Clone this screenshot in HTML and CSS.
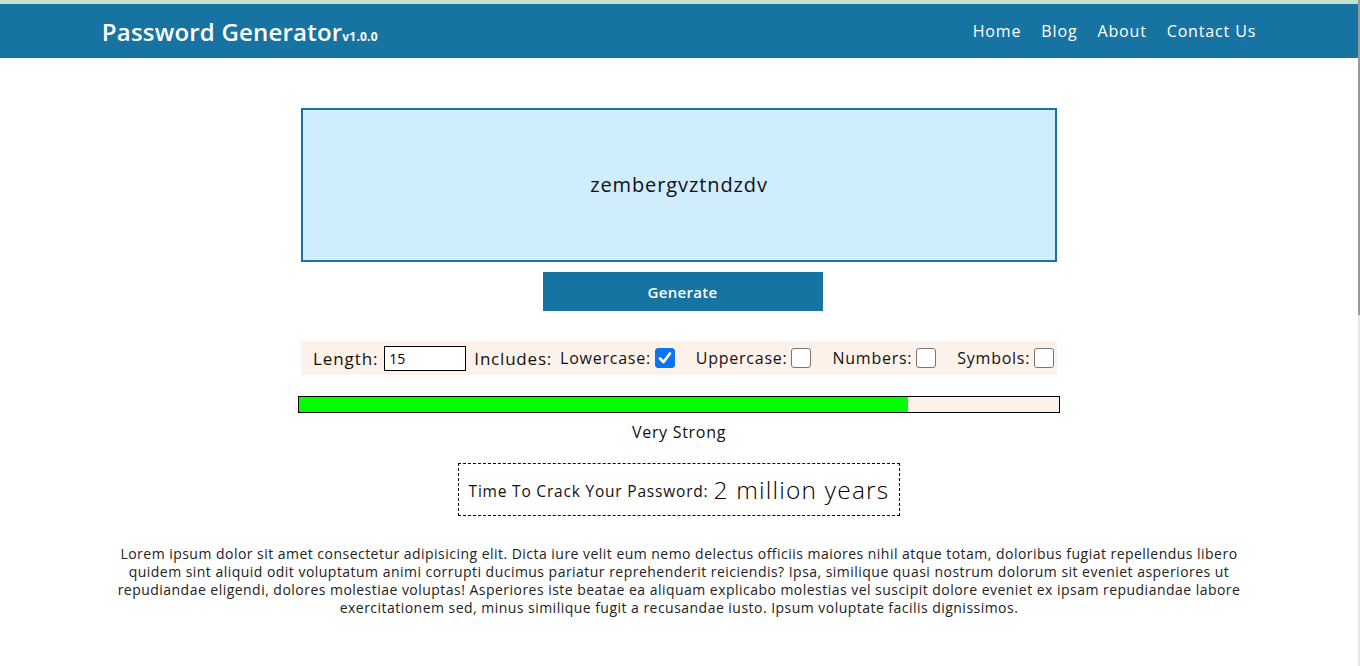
FILE: index.html
```html
<!DOCTYPE html>
<html lang="en">
<head>
<meta charset="utf-8">
<title>Password Generator</title>
<link rel="stylesheet" href="styles.css">
</head>
<body>
<div class="frame">
  <div class="page">
    <div class="topstrip"></div>
    <header class="nav">
      <div class="nav-inner">
        <div class="brand">Password Generator<span class="ver">v1.0.0</span></div>
        <nav class="links">
          <a href="#">Home</a>
          <a href="#">Blog</a>
          <a href="#">About</a>
          <a href="#">Contact Us</a>
        </nav>
      </div>
    </header>
    <main class="main">
      <div class="pw-box">zembergvztndzdv</div>
      <button class="gen-btn">Generate</button>
      <div class="options">
        <label class="opt-len">Length:<input class="len" type="text" value="15"></label>
        <span class="opt-inc">Includes:</span>
        <label class="opt">Lowercase:<span class="cb checked"><svg viewBox="0 0 20 20" width="20" height="20"><path d="M5 10.5 L8.5 14 L15 5.5" fill="none" stroke="#fff" stroke-width="2.8" stroke-linecap="round" stroke-linejoin="round"/></svg></span></label>
        <label class="opt">Uppercase:<span class="cb"></span></label>
        <label class="opt">Numbers:<span class="cb"></span></label>
        <label class="opt">Symbols:<span class="cb"></span></label>
      </div>
      <div class="meter"><div class="meter-fill" style="width:80.1%"></div></div>
      <div class="strength">Very Strong</div>
      <div class="crack"><span class="crack-label">Time To Crack Your Password:</span><span class="crack-val">2 million years</span></div>
      <p class="lorem">Lorem ipsum dolor sit amet consectetur adipisicing elit. Dicta iure velit eum nemo delectus officiis maiores nihil atque totam, doloribus fugiat repellendus libero quidem sint aliquid odit voluptatum animi corrupti ducimus pariatur reprehenderit reiciendis? Ipsa, similique quasi nostrum dolorum sit eveniet asperiores ut repudiandae eligendi, dolores molestiae voluptas! Asperiores iste beatae ea aliquam explicabo molestias vel suscipit dolore eveniet ex ipsam repudiandae labore exercitationem sed, minus similique fugit a recusandae iusto. Ipsum voluptate facilis dignissimos.</p>
    </main>
  </div>
  <div class="scrollbar"><div class="thumb"></div></div>
</div>
</body>
</html>
```
FILE: styles.css
```css
* { box-sizing: border-box; }
html, body { margin: 0; padding: 0; }
body {
  background: #fff;
  font-family: "Open Sans", "DejaVu Sans", sans-serif;
  color: #111;
  height: 666px;
  overflow: hidden;
}
.frame {
  display: flex;
  height: 666px;
}
.page {
  flex: 1;
  min-width: 0;
}
.scrollbar {
  width: 2px;
  display: flex;
  flex-direction: column;
  background: #e6e6e6;
}
.thumb {
  height: 315px;
  background: #9a9a9a;
}
.topstrip {
  height: 4px;
  background: #c3e2c7;
}
.nav {
  background: #1773a2;
  height: 54px;
}
.nav-inner {
  width: 85%;
  margin: 0 auto;
  height: 100%;
  display: flex;
  align-items: center;
  justify-content: space-between;
}
.brand {
  color: #fff;
  font-family: "Open Sans", sans-serif;
  font-weight: 600;
  font-size: 24px;
  letter-spacing: 0.2px;
  padding-top: 1px;
}
.ver {
  font-size: 12px;
  font-weight: 700;
  letter-spacing: 0.2px;
}
.links {
  display: flex;
  gap: 20px;
}
.links a {
  color: #fff;
  text-decoration: none;
  font-size: 16px;
  font-family: "Open Sans", sans-serif;
  font-weight: 500;
  letter-spacing: 0.85px;
}
.main {
  display: flex;
  flex-direction: column;
  align-items: center;
  padding-top: 50px;
}
.pw-box {
  width: 756px;
  height: 154px;
  border: 2px solid #1773a2;
  background: #cfedfd;
  display: flex;
  align-items: center;
  justify-content: center;
  font-family: "Open Sans", sans-serif;
  font-size: 20px;
  letter-spacing: 0.9px;
  color: #111;
  padding-bottom: 2px;
}
.gen-btn {
  margin-top: 10px;
  margin-left: 7px;
  width: 280px;
  height: 39px;
  background: #1773a2;
  color: #fff;
  border: none;
  font-family: "Open Sans", sans-serif;
  font-weight: 600;
  font-size: 15px;
  letter-spacing: 0.3px;
}
.options {
  margin-top: 30px;
  width: 756px;
  height: 34px;
  background: #fdf2ea;
  display: flex;
  align-items: center;
  padding-left: 12px;
  font-family: "Open Sans", sans-serif;
  letter-spacing: 0.75px;
}
.opt-len {
  font-size: 17px;
  letter-spacing: 0.9px;
  display: flex;
  align-items: center;
}
.opt-inc {
  font-size: 17px;
  letter-spacing: 0.8px;
  margin-left: 8px;
  margin-right: 8px;
}
.opt {
  font-size: 16px;
  display: flex;
  align-items: center;
  margin-right: 21px;
}
.opt:last-child { margin-right: 0; }
.len {
  width: 82px;
  height: 25px;
  margin-left: 6px;
  border: 1px solid #000;
  font-family: "Open Sans", sans-serif;
  font-size: 14px;
  letter-spacing: 0;
  padding: 0 4px;
}
.cb {
  width: 20px;
  height: 20px;
  border: 1px solid #767676;
  border-radius: 3px;
  background: #fff;
  margin-left: 4px;
  display: inline-flex;
}
.cb.checked {
  background: #0b74f0;
  border-color: #0b74f0;
}
.cb.checked svg { margin: -1px; }
.meter {
  margin-top: 21px;
  width: 762px;
  height: 17px;
  border: 1px solid #000;
  background: #fdf2ea;
}
.meter-fill {
  height: 100%;
  background: #00ff00;
}
.strength {
  margin-top: 8px;
  font-family: "Open Sans", sans-serif;
  font-size: 16px;
  letter-spacing: 0.7px;
}
.crack {
  margin-top: 20px;
  border: 1px dashed #000;
  height: 53px;
  padding: 0 10px;
  display: flex;
  align-items: center;
  gap: 5px;
}
.crack-label {
  font-family: "Open Sans", sans-serif;
  font-size: 15.5px;
  letter-spacing: 0.8px;
  padding-top: 2px;
}
.crack-val {
  font-family: "Open Sans", sans-serif;
  font-size: 24.5px;
  font-weight: 300;
  letter-spacing: 1.2px;
  color: #000;
}
.lorem {
  margin: 29px 0 0;
  width: 1136px;
  text-align: center;
  font-family: "Open Sans", sans-serif;
  font-size: 14px;
  letter-spacing: 0.47px;
  line-height: 18px;
  color: #222;
}
```
